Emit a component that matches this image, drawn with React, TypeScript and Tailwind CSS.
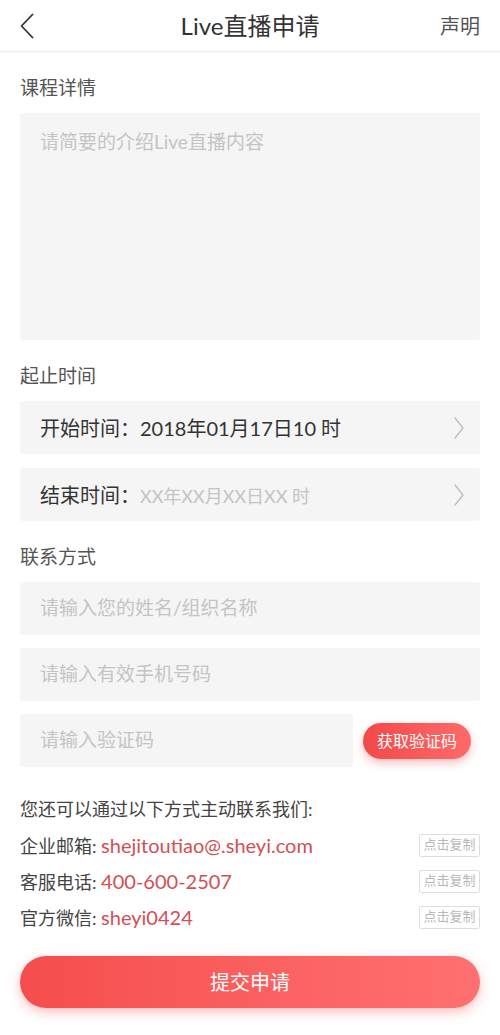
import React from "react";

const FONT = { fontFamily: 'Lato, "Noto Sans CJK SC", "Noto Sans", sans-serif' };

function BackGlyph() {
  return (
    <svg viewBox="0 0 14 26" className="h-[26px] w-[14px]" fill="none" stroke="#333" strokeWidth="1.8" strokeLinecap="round" strokeLinejoin="round" aria-hidden="true">
      <path d="M12.5 1.5 1.5 13l11 11.5" />
    </svg>
  );
}

function RightGlyph() {
  return (
    <svg viewBox="0 0 10 22" className="h-[22px] w-[10px]" fill="none" stroke="#bdbdbd" strokeWidth="1.3" strokeLinecap="round" strokeLinejoin="round" aria-hidden="true">
      <path d="M1 1l8 10-8 10" />
    </svg>
  );
}

function SectionLabel({ children }: { children: React.ReactNode }) {
  return <div className="mt-[23px] mb-[12px] text-[19px] leading-[26px] text-[#555]">{children}</div>;
}

function Field({ placeholder }: { placeholder: string }) {
  return (
    <div className="flex h-[53px] items-center rounded-[3px] bg-[#f5f5f5] pl-[20px] text-[19px] text-[#c4c4c4]">
      {placeholder}
    </div>
  );
}

function CopyTag() {
  return (
    <span className="flex h-[23px] w-[61px] items-center justify-center rounded-[2px] border border-[#dedede] text-[13px] text-[#b8b8b8]">
      点击复制
    </span>
  );
}

export default function App() {
  const contacts = [
    { label: "企业邮箱:", value: "shejitoutiao@.sheyi.com" },
    { label: "客服电话:", value: "400-600-2507" },
    { label: "官方微信:", value: "sheyi0424" },
  ];

  return (
    <div className="min-h-[1035px] w-[500px] bg-white" style={FONT}>
      <header className="relative flex h-[52px] items-center justify-between border-b border-[#ececec] px-[20px] shadow-[0_1px_3px_rgba(0,0,0,0.04)]">
        <BackGlyph />
        <h1 className="absolute left-1/2 -translate-x-1/2 text-[24px] font-normal text-[#333]">Live直播申请</h1>
        <span className="text-[20px] text-[#555]">声明</span>
      </header>

      <main className="px-[20px]">
        <SectionLabel>课程详情</SectionLabel>
        <div className="h-[227px] rounded-[3px] bg-[#f5f5f5] px-[20px] pt-[16px] text-[19px] leading-[26px] text-[#c4c4c4]">
          请简要的介绍Live直播内容
        </div>

        <SectionLabel>起止时间</SectionLabel>
        <div className="flex flex-col gap-[14px]">
          <div className="flex h-[53px] items-center justify-between rounded-[3px] bg-[#f5f5f5] pl-[20px] pr-[16px] text-[20px]">
            <span className="text-[#333]">
              开始时间：<span>2018年01月17日10 时</span>
            </span>
            <RightGlyph />
          </div>
          <div className="flex h-[53px] items-center justify-between rounded-[3px] bg-[#f5f5f5] pl-[20px] pr-[16px] text-[20px]">
            <span className="text-[#333]">
              结束时间：<span className="text-[18px] text-[#c4c4c4]">XX年XX月XX日XX 时</span>
            </span>
            <RightGlyph />
          </div>
        </div>

        <SectionLabel>联系方式</SectionLabel>
        <div className="flex flex-col gap-[13px]">
          <Field placeholder="请输入您的姓名/组织名称" />
          <Field placeholder="请输入有效手机号码" />
          <div className="flex items-center gap-[10px]">
            <div className="flex h-[53px] w-[333px] items-center rounded-[3px] bg-[#f5f5f5] pl-[20px] text-[19px] text-[#c4c4c4]">
              请输入验证码
            </div>
            <button
              type="button"
              className="h-[36px] w-[108px] rounded-full bg-gradient-to-r from-[#f24848] to-[#ff6a6a] text-[16px] text-white shadow-[0_4px_10px_rgba(240,70,70,0.35)]"
            >
              获取验证码
            </button>
          </div>
        </div>

        <p className="mt-[29px] text-[18px] leading-[26px] text-[#444]">您还可以通过以下方式主动联系我们:</p>
        <ul className="mt-[10px] flex flex-col gap-[10px]">
          {contacts.map((c) => (
            <li key={c.label} className="flex h-[26px] items-center justify-between text-[18px]">
              <span className="text-[#444]">
                {c.label} <span className="text-[20px] text-[#d24f55]">{c.value}</span>
              </span>
              <CopyTag />
            </li>
          ))}
        </ul>

        <button
          type="button"
          className="mt-[26px] h-[52px] w-full rounded-full bg-gradient-to-r from-[#f54d4d] to-[#ff7070] text-[20px] text-white shadow-[0_4px_12px_rgba(240,70,70,0.35)]"
        >
          提交申请
        </button>
      </main>
    </div>
  );
}
